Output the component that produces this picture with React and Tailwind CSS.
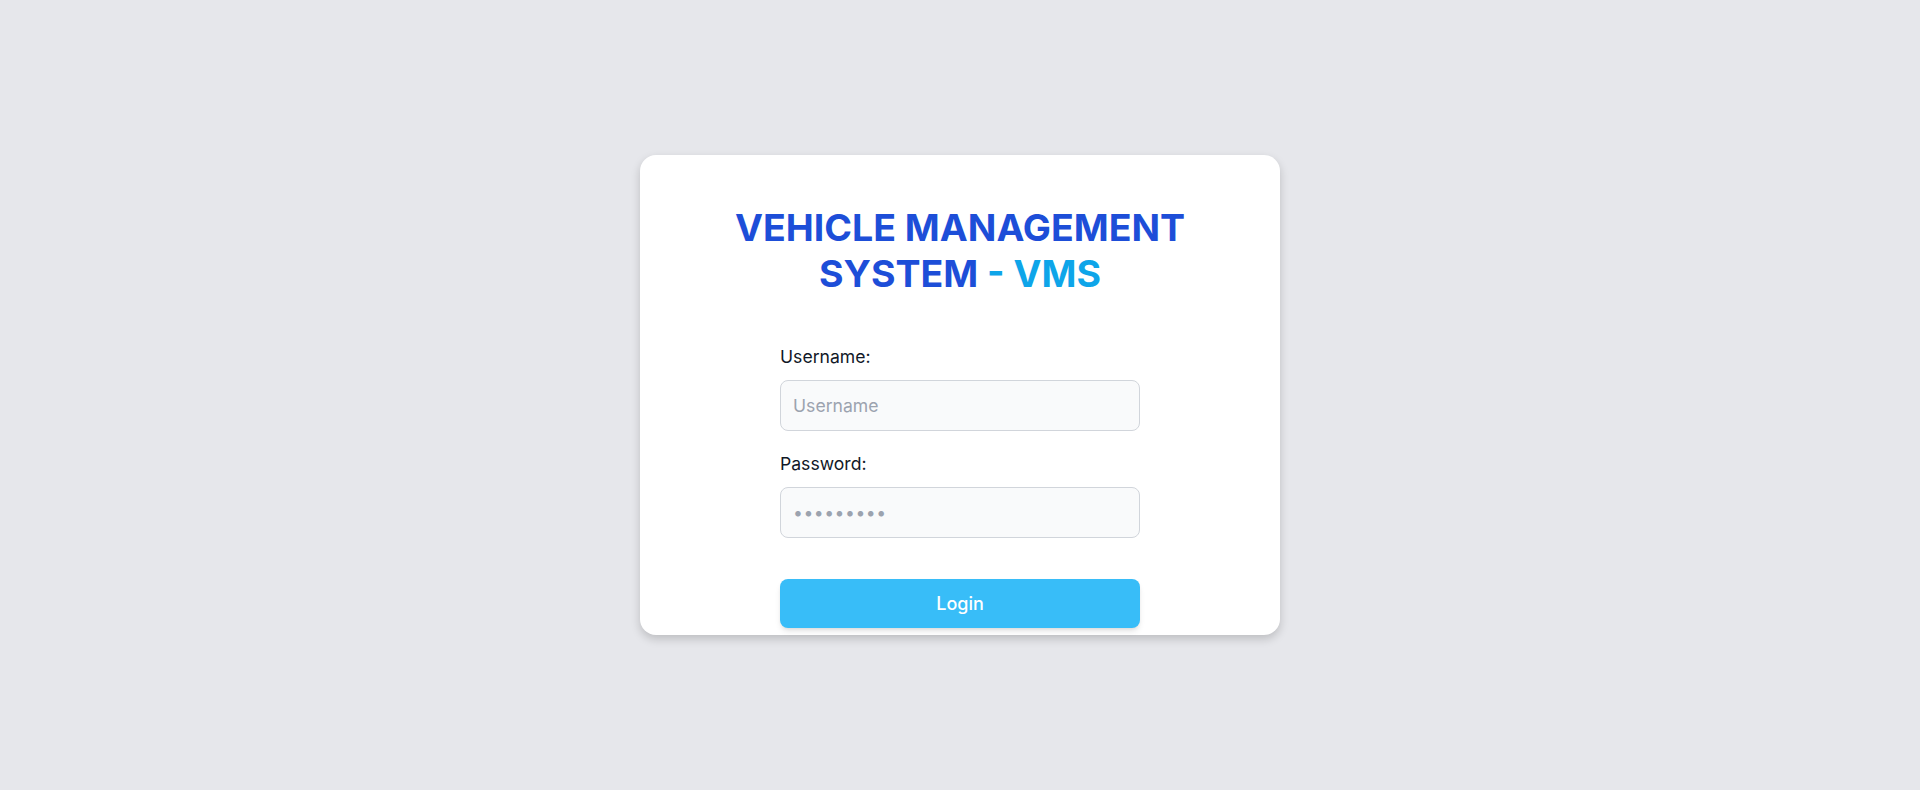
import { useState } from 'react';

export default function App() {
    const [username, setUsername] = useState('');
    const [password, setPassword] = useState('');

    const submit = (e) => {
        e.preventDefault();
    };

    return (
        <div
            className="flex min-h-screen items-center justify-center bg-[#e6e7eb]"
            style={{ fontFamily: 'Inter, "Liberation Sans", sans-serif' }}
        >
            <div className="flex h-[480px] w-[640px] flex-col items-center rounded-2xl bg-white pt-[50px] shadow-[0_4px_10px_rgba(0,0,0,0.18)]">
                <h1 className="text-center text-[37.5px] leading-[46px] font-bold text-[#1d4ed8]">
                    VEHICLE MANAGEMENT
                    <br />
                    SYSTEM <span className="text-[#0ea5e9]">- VMS</span>
                </h1>

                <form onSubmit={submit} className="mt-[48px] w-[360px]">
                    <label className="mb-[11px] block text-[17.6px] leading-6 text-[#111827]">
                        Username:
                    </label>
                    <input
                        type="text"
                        value={username}
                        onChange={(e) => setUsername(e.target.value)}
                        placeholder="Username"
                        className="block h-[51px] w-full rounded-lg border border-[#d1d5db] bg-[#f9fafb] px-3 text-[17.6px] text-gray-900 placeholder:text-[#9ca3af] focus:outline-none"
                    />

                    <label className="mt-[21px] mb-[11px] block text-[17.6px] leading-6 text-[#111827]">
                        Password:
                    </label>
                    <input
                        type="password"
                        value={password}
                        onChange={(e) => setPassword(e.target.value)}
                        placeholder="•••••••••"
                        className="block h-[51px] w-full rounded-lg border border-[#d1d5db] bg-[#f9fafb] px-3 text-[17.6px] tracking-[0.5px] text-gray-900 placeholder:text-[#9ca3af] focus:outline-none"
                    />

                    <button
                        type="submit"
                        className="mt-[41px] h-[49px] w-full rounded-lg bg-[#38bdf8] text-[18px] font-medium text-white shadow-md"
                    >
                        Login
                    </button>
                </form>
            </div>
        </div>
    );
}
